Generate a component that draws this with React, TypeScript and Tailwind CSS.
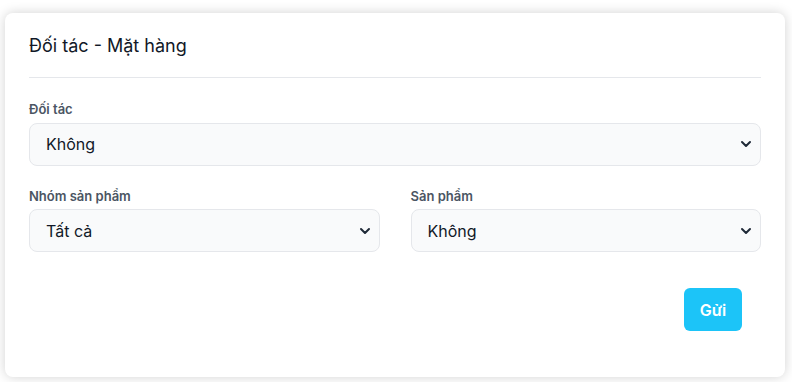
import { ChevronDown } from "lucide-react";

function SelectBox({ value }: { value: string }) {
  return (
    <div className="flex h-[43px] items-center justify-between rounded-lg border border-[#e5e7eb] bg-[#f9fafb] pl-4 pr-1.5">
      <span className="text-base text-[#111827]">{value}</span>
      <ChevronDown className="h-4 w-4 text-[#1f2937]" strokeWidth={3} />
    </div>
  );
}

function Field({ label, value }: { label: string; value: string }) {
  return (
    <div className="flex flex-col">
      <label className="mb-[3px] text-[13px] font-semibold text-[#4b5563]">{label}</label>
      <SelectBox value={value} />
    </div>
  );
}

export default function App() {
  return (
    <div className="min-h-screen bg-white pl-[5px] pr-[7px] pt-[13px] pb-[5px] font-['Inter',sans-serif]">
      <div className="h-[364px] rounded-lg bg-white px-6 shadow-[0_0_12px_rgba(0,0,0,0.18)]">
        <div className="border-b border-[#e5e7eb] pt-[21px] pb-[19px]">
          <h2 className="text-[18px] leading-6 text-[#111827]">Đối tác - Mặt hàng</h2>
        </div>
        <div className="pt-[22px]">
          <Field label="Đối tác" value="Không" />
        </div>
        <div className="grid grid-cols-2 gap-[31px] pt-[21px]">
          <Field label="Nhóm sản phẩm" value="Tất cả" />
          <Field label="Sản phẩm" value="Không" />
        </div>
        <div className="flex justify-end pt-[36px] pr-[19px]">
          <button className="h-[43px] w-[58px] rounded-md bg-[#1cc4f8] text-base font-semibold text-white">
            Gửi
          </button>
        </div>
      </div>
    </div>
  );
}
